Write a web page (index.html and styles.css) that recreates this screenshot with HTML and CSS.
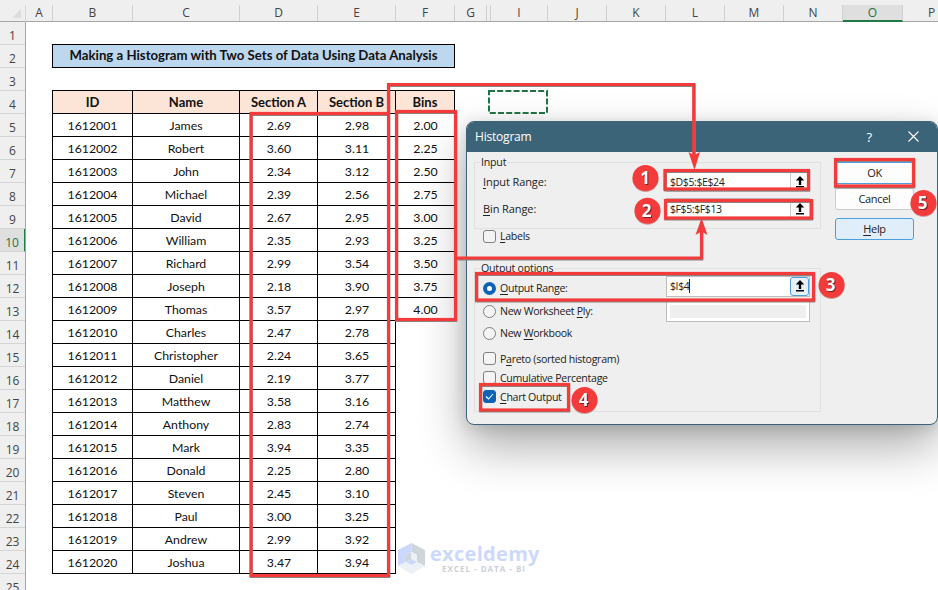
FILE: index.html
```html
<!DOCTYPE html>
<html lang="en">
<head>
    <meta charset="UTF-8">
    <meta name="viewport" content="width=device-width, initial-scale=1.0">
    <title>Histogram</title>
    <link rel="stylesheet" href="styles.css">
</head>
<body>
    <div class="app">
        <div class="cols">
            <div class="corner"><svg width="9" height="9"><path d="M9 0V9H0Z" fill="#dcdcdc"/></svg></div>
            <div class="col">A</div>
            <div class="col">B</div>
            <div class="col">C</div>
            <div class="col">D</div>
            <div class="col">E</div>
            <div class="col">F</div>
            <div class="col">G</div>
            <div class="col"></div>
            <div class="col">I</div>
            <div class="col">J</div>
            <div class="col">K</div>
            <div class="col">L</div>
            <div class="col">M</div>
            <div class="col">N</div>
            <div class="col on">O</div>
            <div class="col">P</div>
        </div>
        <div class="main">
            <div class="rows"></div>
            <div class="sheet">
                <div class="title">Making a Histogram with Two Sets of Data Using Data Analysis</div>
                <div class="table"></div>
            </div>
        </div>

        <div class="logo">
            <svg width="27" height="31" viewBox="0 0 27 31">
                <path d="M13.500 0L0 7V23L8 19V12L13.500 9Z" fill="#cbd8fb"/>
                <path d="M13.500 0L27 7V23L19 19V12L13.500 9Z" fill="#d0d5d9"/>
                <path d="M0 23L8 19L13.500 22L19 19L27 23L13.500 31Z" fill="#ecf1f6"/>
                <path d="M13.500 9L8 12V19L13.500 16Z" fill="#d0d5d9"/>
                <path d="M13.500 9L19 12V19L13.500 16Z" fill="#ecf1f6"/>
                <path d="M8 19L13.500 16L19 19L13.500 22Z" fill="#cbd8fb"/>
            </svg>
            <div class="brand">
                <div class="name">exceldemy</div>
                <div class="tag">EXCEL - DATA - BI</div>
            </div>
        </div>

        <div class="dialog">
            <div class="bar">
                <span class="cap">Histogram</span>
                <span class="q">?</span>
                <svg class="x" width="11" height="11"><path d="M.5 .5L10.5 10.5M10.5 .5L.5 10.5" stroke="#fff" stroke-width="1.1"/></svg>
            </div>
            <div class="body">
                <div class="form">
                    <div class="group input">
                        <div class="legend">Input</div>
                        <div class="row range"><span class="lbl"><u>I</u>nput Range:</span><div class="field"><span>$D$5:$E$24</span><i class="pick"><svg width="10" height="12"><path d="M5 0L9.2 4.5H6.2V9H3.8V4.5H.8ZM1 10H9V11.6H1Z"/></svg></i></div></div>
                        <div class="row range"><span class="lbl"><u>B</u>in Range:</span><div class="field"><span>$F$5:$F$13</span><i class="pick"><svg width="10" height="12"><path d="M5 0L9.2 4.5H6.2V9H3.8V4.5H.8ZM1 10H9V11.6H1Z"/></svg></i></div></div>
                    </div>
                    <div class="row labels"><i class="box"></i><span class="txt"><u>L</u>abels</span></div>
                    <div class="group output">
                        <div class="legend">Output options</div>
                        <div class="row radio"><i class="dot sel"></i><span class="lbl txt"><u>O</u>utput Range:</span><div class="field tall"><span class="caret">$I$4</span><i class="pick act"><svg width="10" height="12"><path d="M5 0L9.2 4.5H6.2V9H3.8V4.5H.8ZM1 10H9V11.6H1Z"/></svg></i></div></div>
                        <div class="row radio"><i class="dot"></i><span class="lbl txt">New Worksheet <u>P</u>ly:</span><div class="field off"></div></div>
                        <div class="row radio"><i class="dot"></i><span class="txt">New <u>W</u>orkbook</span></div>
                        <div class="row check first"><i class="box"></i><span class="txt">P<u>a</u>reto (sorted histogram)</span></div>
                        <div class="row check"><i class="box"></i><span class="txt">Cu<u>m</u>ulative Percentage</span></div>
                        <div class="row check"><i class="box sel"><svg width="9" height="7"><path d="M1 3.5L3.5 6L8 1" fill="none" stroke="#fff" stroke-width="1.1"/></svg></i><span class="txt"><u>C</u>hart Output</span></div>
                    </div>
                </div>
                <div class="btns">
                    <div class="btn ok">OK</div>
                    <div class="btn cancel">Cancel</div>
                    <div class="btn help"><span><u>H</u>elp</span></div>
                </div>
            </div>
        </div>

        <!-- callouts drawn over the sheet and the dialog -->
        <svg class="marks" width="938" height="590">
            <rect x="489" y="91" width="58" height="22" fill="none" stroke="#1f7244" stroke-width="2" stroke-dasharray="6 2.2"/>
            <g class="shade" transform="translate(.3 1)">
                <rect x="251" y="113.5" width="137.5" height="462"/>
                <rect x="396.500" y="111.500" width="59" height="208"/>
                <path d="M388.500 113V84.500H693.800V158M457 258H701.500V230"/>
                <rect x="665" y="170.500" width="143.500" height="18.500"/>
                <rect x="665.500" y="200.500" width="146" height="17.500"/>
                <rect x="476.500" y="273.500" width="337" height="26.500"/>
                <rect x="480.500" y="384.500" width="88" height="25.500"/>
                <rect x="835.500" y="159.500" width="78" height="26.500"/>
            </g>
            <g class="red">
                <rect x="251" y="113.5" width="137.5" height="462"/>
                <rect x="396.500" y="111.500" width="59" height="208"/>
                <path d="M388.500 113V84.500H693.800V158M457 258H701.500V230"/>
                <rect x="665" y="170.500" width="143.500" height="18.500"/>
                <rect x="665.500" y="200.500" width="146" height="17.500"/>
                <rect x="476.500" y="273.500" width="337" height="26.500"/>
                <rect x="480.500" y="384.500" width="88" height="25.500"/>
                <rect x="835.500" y="159.500" width="78" height="26.500"/>
            </g>
            <path d="M688.500 152L694 155L700 152L694.500 170Z" fill="#f43b3b"/>
            <path d="M695.500 235L701.500 231.500L707.500 235L701.500 218Z" fill="#f43b3b"/>
            <g class="num">
                <circle cx="645.500" cy="178" r="13"/><text x="645" y="184">1</text>
                <circle cx="647.500" cy="210.800" r="13"/><text x="646.500" y="217">2</text>
                <circle cx="831.600" cy="285" r="13"/><text x="830.500" y="291">3</text>
                <circle cx="584.500" cy="400" r="13"/><text x="583.500" y="406">4</text>
                <circle cx="923.500" cy="203" r="13"/><text x="922.500" y="209">5</text>
            </g>
        </svg>
    </div>
    <script>
        var names=['James','Robert','John','Michael','David','William','Richard','Joseph','Thomas','Charles','Christopher','Daniel','Matthew','Anthony','Mark','Donald','Steven','Paul','Andrew','Joshua']
        var a=['2.69','3.60','2.34','2.39','2.67','2.35','2.99','2.18','3.57','2.47','2.24','2.19','3.58','2.83','3.94','2.25','2.45','3.00','2.99','3.47']
        var b=['2.98','3.11','3.12','2.56','2.95','2.93','3.54','3.90','2.97','2.78','3.65','3.77','3.16','2.74','3.35','2.80','3.10','3.25','3.92','3.94']
        var bins=['2.00','2.25','2.50','2.75','3.00','3.25','3.50','3.75','4.00']
        var head=['ID','Name','Section A','Section B','Bins']
        var html=''
        head.forEach(function(h){
            html+='<div class="cell head">'+h+'</div>'
        })
        names.forEach(function(n,i){
            html+='<div class="cell id">'+(1612001+i)+'</div><div class="cell">'+n+'</div><div class="cell val">'+a[i]+'</div><div class="cell val">'+b[i]+'</div>'
            html+=bins[i]?'<div class="cell val">'+bins[i]+'</div>':'<div></div>'
        })
        document.getElementsByClassName('table')[0].innerHTML=html
        html=''
        for(var r=1;r<26;r++){
            html+='<div class="rn'+(r==10?' on':'')+'">'+r+'</div>'
        }
        document.getElementsByClassName('rows')[0].innerHTML=html
    </script>
</body>
</html>
```
FILE: styles.css
```css
*{
    margin:0;
    padding:0;
    box-sizing:border-box;
}
.app{
    position:relative;
    width:938px;
    height:590px;
    overflow:hidden;
    background:#fff;
    font-family:"Open Sans","Noto Sans",sans-serif;
}
.cols{
    display:grid;
    grid-template-columns:26px 27px 80px 107px 78px 78px 59px 32px 4px 57px 59px 59px 59px 59px 59px 60px 58px;
    height:22px;
    padding-top:5px;
    background:#efefef;
    border-bottom:1px solid #a6a6a6;
}
.corner{
    display:flex;
    justify-content:flex-end;
    padding:4px 4px 0 0;
    border-right:1px solid #d4d4d4;
}
.col{
    height:16px;
    border-right:1px solid #d0d0d0;
    font-size:12px;
    line-height:16px;
    text-align:center;
    color:#444;
}
.col.on{
    height:17px;
    background:#dfdfdf;
    border-bottom:2px solid #1f7a45;
    color:#1f7244;
}
.main{
    display:flex;
}
.rows{
    width:26px;
    height:568px;
    overflow:hidden;
    background:#efefef;
    border-right:1px solid #a6a6a6;
}
.rn{
    height:23px;
    border-bottom:1px solid #d4d4d4;
    padding-top:3px;
    line-height:22px;
    font-size:12px;
    text-align:center;
    color:#444;
}
.rn.on{
    background:#dfdfdf;
    border-right:2px solid #1f7a45;
    color:#1f7244;
    width:26px;
}
.sheet{
    padding:22px 0 0 26px;
    font-family:Lato,"Open Sans",sans-serif;
    color:#111;
}
.title{
    width:403px;
    height:24px;
    border:1px solid #000;
    background:#bdd7ee;
    font-size:13.2px;
    font-weight:bold;
    line-height:21px;
    text-align:center;
    white-space:nowrap;
}
.table{
    display:grid;
    grid-template-columns:81px 107px 78px 78px 59px;
    grid-auto-rows:23px;
    width:403px;
    margin-top:23px;
}
.cell{
    border-right:1px solid #000;
    border-bottom:1px solid #000;
    padding-top:1px;
    font-size:12.3px;
    line-height:22px;
    text-align:center;
    white-space:nowrap;
}
.cell.head{
    background:#fce4d6;
    border-top:1px solid #000;
    height:24px;
    margin-top:-1px;
    padding-top:0;
    font-size:13px;
    font-weight:bold;
}
.cell.val{
    padding-left:1px;
}
.cell:nth-child(5n+1){
    border-left:1px solid #000;
}
.logo{
    position:absolute;
    left:398px;
    top:543px;
    display:flex;
    gap:5px;
}
.name{
    font-size:20px;
    font-weight:bold;
    letter-spacing:.3px;
    line-height:22px;
    color:#cdd9fb;
}
.tag{
    padding-left:12px;
    font-size:8px;
    font-weight:bold;
    letter-spacing:1px;
    line-height:8px;
    color:#cdd0d8;
    white-space:nowrap;
}
.dialog{
    position:absolute;
    left:466px;
    top:121px;
    width:472px;
    height:304px;
    border:1px solid #3c6478;
    border-radius:8px;
    background:#efefef;
    box-shadow:0 22px 48px rgba(0,0,0,.32),0 3px 16px rgba(0,0,0,.14);
    font-size:11px;
    color:#222;
    overflow:hidden;
}
.bar{
    display:flex;
    align-items:center;
    height:30px;
    padding:0 18px 1px 8px;
    background:#3c6478;
    color:#fff;
}
.cap{
    flex:1;
    font-size:12px;
    letter-spacing:-.2px;
}
.q{
    margin-right:36px;
    font-size:13px;
}
.body{
    display:flex;
    justify-content:space-between;
    padding:10px 23px 0 7px;
}
.group{
    width:347px;
    border:1px solid #e0e0e0;
    padding-left:8px;
}
.input{
    height:67px;
}
.output{
    height:144px;
    margin-top:24px;
}
.legend{
    width:max-content;
    height:14px;
    margin:-8px 0 0 -3px;
    padding:0 1px;
    background:#efefef;
    line-height:14px;
    font-size:10.6px;
    letter-spacing:-.2px;
}
.row{
    display:flex;
    align-items:center;
    white-space:nowrap;
}
.range{
    height:27px;
}
.range:nth-child(2){
    margin-top:-1px;
}
.lbl{
    flex:1;
    letter-spacing:-.1px;
}
.txt{
    padding-left:4px;
    font-size:10.6px;
    letter-spacing:-.3px;
}
u{
    text-underline-offset:2px;
}
.field{
    display:flex;
    justify-content:space-between;
    align-items:center;
    width:144px;
    height:21px;
    margin-right:10px;
    padding-left:3px;
    border:1px solid #bdbdbd;
    background:#fff;
    font-size:10.5px;
    letter-spacing:-.4px;
}
.tall{
    position:relative;
    top:-2px;
}
.pick{
    display:flex;
    align-items:center;
    justify-content:center;
    width:19px;
    height:19px;
    background:#fafafa;
    border-left:1px solid #ccc;
}
.pick.act{
    border:1px solid #4a9fdc;
    border-radius:3px;
    background:#e6f1fa;
}
.caret{
    border-right:1px solid #222;
}
.off{
    padding:0;
    border:4px solid #fff;
    outline:1px solid #bdbdbd;
    outline-offset:-1px;
    background:#efefef;
}
.labels{
    height:16px;
    margin-top:-1px;
    padding-left:9px;
}
.box,.dot{
    display:flex;
    align-items:center;
    justify-content:center;
    width:13px;
    height:13px;
    border:1px solid #808080;
    border-radius:3px;
    background:#f4f4f4;
}
.dot{
    border-radius:50%;
}
.box.sel{
    background:#0a63b5;
    border-color:#0a63b5;
}
.dot.sel{
    background:#fff;
    border:4px solid #0a63b5;
}
.radio{
    height:22px;
}
.radio:nth-child(2){
    margin-top:2px;
}
.radio:nth-child(3){
    margin-top:1px;
}
.check{
    height:19px;
}
.check.first{
    margin-top:5px;
}
.btns{
    width:79px;
}
.btn{
    height:22px;
    border:1px solid #ccc;
    border-radius:3px;
    background:#fdfdfd;
    line-height:20px;
    text-align:center;
    letter-spacing:-.3px;
}
.ok{
    border-color:#4a9fdc;
}
.cancel{
    margin-top:4px;
}
.help{
    margin-top:8px;
    border-color:#4a9fdc;
    background:#e0eef9;
}
.marks{
    position:absolute;
    left:0;
    top:0;
}
.red,.shade{
    fill:none;
    stroke:#f43b3b;
    stroke-width:3.2;
}
.shade{
    stroke:#888;
    stroke-width:3;
}
.num circle{
    fill:#f43b3b;
    filter:drop-shadow(0 1px 0 #c8a0a0);
}
.num text{
    fill:#fff;
    font:bold 17px "Open Sans",sans-serif;
    text-anchor:middle;
    filter:drop-shadow(1px 1px 0 #7a2020);
}
```
